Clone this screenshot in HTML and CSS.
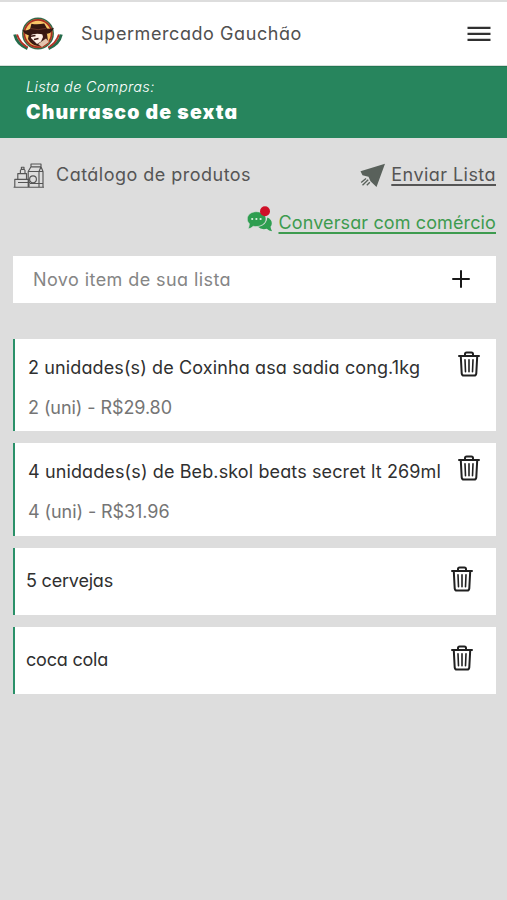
FILE: index.html
```html
<!DOCTYPE html>
<html lang="pt-BR">
<head>
<meta charset="utf-8">
<title>Supermercado Gauchão</title>
<link rel="stylesheet" href="styles.css">
</head>
<body>
<svg class="symbols" aria-hidden="true">
  <symbol id="trash" viewBox="0 0 22 26">
    <g fill="none" stroke="#202020" stroke-linejoin="round" stroke-linecap="round">
      <path stroke-width="2" d="M1 5H21M7 4.5V3Q7 1.5 8.6 1.5H13.4Q15 1.5 15 3V4.5M2.8 5.5L3.7 22.3Q3.9 24.5 5.8 24.5H16.2Q18.1 24.5 18.3 22.3L19.2 5.5"/>
      <path stroke-width="1.6" d="M7 8.7L7.5 20.7M11 8.7V20.7M15 8.7L14.5 20.7"/>
    </g>
  </symbol>
</svg>
<header class="topbar">
  <svg class="logo" viewBox="0 0 50 34">
    <g fill="none" stroke-linecap="butt">
      <path d="M1.7 17.5Q4 27.5 14.5 31.5" stroke="#246b4b" stroke-width="3"/>
      <path d="M4 17.5Q7 26.5 15 30.3" stroke="#b53327" stroke-width="2"/>
      <path d="M48.3 17.5Q46 27.5 35.5 31.5" stroke="#246b4b" stroke-width="3"/>
      <path d="M46 17.5Q43 26.5 35 30.3" stroke="#b53327" stroke-width="2"/>
    </g>
    <circle cx="25" cy="16.5" r="16.6" fill="#fff"/>
    <circle cx="25" cy="16.5" r="15.2" fill="#f2a43a" stroke="#35694b" stroke-width="1.5"/>
    <circle cx="25" cy="16.5" r="13.6" fill="#f8c567" stroke="#a82e22" stroke-width="1.7"/>
    <path d="M16 17H34L35 24Q31 29 25 29Q18 28 15 22Z" fill="#3c1b14"/>
    <path d="M18.3 16.5L29 16L30 20L28 24.5L24 27L20.5 23.5L18 21Z" fill="#fff1e5"/>
    <path d="M18 19.2L22.5 18.5M21 22.5L25.5 21.5" stroke="#3c1b14" stroke-width="1.5"/>
    <path d="M25 27L33 21.5L36 25L29 30Z" fill="#e3c5ad"/>
    <path d="M9.5 13Q14 14.3 17.2 11.7L18.4 6.7Q24 8 31.2 6.5L34 11.5Q38 12 41 10.8Q39 17 30.5 17.5Q22 15.5 16.5 18.5Q11.5 17.5 9.5 13Z" fill="#351710"/>
    <path d="M17.5 11.5Q25 14 33.2 11.3" fill="none" stroke="#74382a" stroke-width=".8"/>
  </svg>
  <h1 class="store">Supermercado Gauchão</h1>
  <svg class="menu" viewBox="0 0 24 16"><path d="M.5 1.8H23.5M.5 7.8H23.5M.5 13.8H23.5" stroke="#303030" stroke-width="2.2"/></svg>
</header>
<section class="banner">
  <p class="banner-label">Lista de Compras:</p>
  <h2 class="banner-title">Churrasco de sexta</h2>
</section>
<main class="content">
  <nav class="actions">
    <a class="catalog">
      <svg class="catalog-icon" viewBox="0 0 32 26"><g fill="none" stroke="#555" stroke-width="1.15" stroke-linejoin="round"><path d="M.6 25.2H31M1.8 25V17.4H16V25M4.8 17V11.6H13.5V17M7.4 11.4V8.5L8.4 7V5.2H11V7L12 8.5V11.4M8 7.4H11.6M5 20.5H17M15.2 25V9.5L18 4.8H28L30 9.5V25M18 4.8V2H28V4.8M15.2 9.5H26V25M26 9.5L28 4.8M26 9.5H30M26 21.5H30M17 21.5H26"/><circle cx="20" cy="17.3" r="3.4"/></g></svg>
      <span class="catalog-label">Catálogo de produtos</span>
    </a>
    <a class="send">
      <svg class="send-icon" viewBox="0 0 26 25"><path d="M25 .8L.5 8.3L2.5 12.3L8.5 13.8L10.5 18.3L16.5 24Z" fill="#59615b"/><path d="M6 15.5L1.2 19.5M8.2 16.7L2.5 22.2M9.8 19.2L6.8 22.2" stroke="#59615b" stroke-width="1.4"/></svg>
      <span class="link">Enviar Lista</span>
    </a>
  </nav>
  <div class="chat">
    <svg class="chat-icon" viewBox="0 0 26 27"><path d="M20.4 11.5Q24.8 13.5 24.8 17.2Q24.8 19.2 23.5 20.8Q23.8 23.3 25.1 25.2Q22 25 19.8 22.8Q14 24 11 20.8Q19.5 19.8 20.4 11.5Z" fill="#2e9e50"/><path d="M9.5 5.7C3.8 5.7.3 8.9.3 13C.3 15 1.2 16.6 2.4 17.8Q2.2 20.8 1 22.8Q4.2 22.5 6.2 20.3C13 21.6 19 18 19 13C19 8.9 15.2 5.7 9.5 5.7Z" fill="#2e9e50" stroke="#ddd" stroke-width=".6"/><g fill="#dff1e2"><circle cx="5.2" cy="13" r="1.1"/><circle cx="9.4" cy="13" r="1.1"/><circle cx="13.6" cy="13" r="1.1"/></g><circle cx="18" cy="5.2" r="5" fill="#cf1028"/></svg>
    <a class="link">Conversar com comércio</a>
  </div>
  <div class="new-item">
    <span class="placeholder">Novo item de sua lista</span>
    <svg class="plus" viewBox="0 0 18 18"><path d="M9 1V17M1 9H17" stroke="#181818" stroke-width="2" stroke-linecap="round"/></svg>
  </div>
  <ul class="items">
    <li class="item detailed">
      <div class="item-text"><p class="name">2 unidades(s) de Coxinha asa sadia cong.1kg</p><p class="price">2 (uni) - R$29.80</p></div>
      <svg class="trash"><use href="#trash"/></svg>
    </li>
    <li class="item detailed">
      <div class="item-text"><p class="name">4 unidades(s) de Beb.skol beats secret lt 269ml</p><p class="price">4 (uni) - R$31.96</p></div>
      <svg class="trash"><use href="#trash"/></svg>
    </li>
    <li class="item simple"><p class="name">5 cervejas</p><svg class="trash"><use href="#trash"/></svg></li>
    <li class="item simple"><p class="name">coca cola</p><svg class="trash"><use href="#trash"/></svg></li>
  </ul>
</main>
</body>
</html>
```
FILE: styles.css
```css
* { box-sizing: border-box; margin: 0; padding: 0; }
body {
  min-height: 900px;
  background: #ddd;
  color: #303030;
  font: 400 18px/24px Inter, "Liberation Sans", sans-serif;
  font-feature-settings: "cv11";
  white-space: nowrap;
}
svg { display: block; flex: none; }
.symbols { position: absolute; width: 0; height: 0; }
.topbar {
  display: flex;
  align-items: center;
  height: 66px;
  padding: 0 16px 0 13px;
  border-top: 2px solid #ddd;
  border-bottom: 1px solid #d5dfda;
  background: #fff;
}
.logo { width: 50px; height: 34px; }
.store { flex: 1; margin-left: 18px; font-size: 18px; font-weight: 400; letter-spacing: .57px; color: #505050; }
.menu { width: 24px; height: 16px; }
.banner { height: 72px; padding: 10px 26px; border-top: 1px solid #217551; background: #27855d; color: #fff; }
.banner-label { font-size: 14.5px; line-height: 20px; font-style: italic; font-weight: 300; letter-spacing: .33px; }
.banner-title { margin-top: 1px; font-size: 19.5px; line-height: 28px; font-weight: 900; letter-spacing: 1.15px; }
.content { padding: 25px 11px 0 13px; }
.actions { display: flex; justify-content: space-between; height: 24px; color: #555; }
.catalog, .send, .chat { display: flex; align-items: center; }
.catalog-icon { width: 32px; height: 26px; margin-right: 11px; }
.catalog-label { letter-spacing: .48px; }
.send-icon { width: 26px; height: 25px; margin-right: 5px; }
.link { text-decoration: underline; text-decoration-thickness: 1.5px; text-underline-offset: 3px; text-decoration-skip-ink: none; }
.send .link { letter-spacing: .45px; }
.chat { justify-content: flex-end; height: 30px; margin-top: 21px; color: #3d9b4f; }
.chat .link { letter-spacing: .12px; }
.chat-icon { width: 26px; height: 27px; margin: -7px 5px 0 0; }
.new-item { display: flex; align-items: center; justify-content: space-between; height: 47px; margin: 18px 0 36px; padding: 0 26px 0 20px; background: #fff; }
.placeholder { letter-spacing: .42px; color: #858585; }
.plus { width: 18px; height: 18px; margin-top: -2px; }
.items { display: grid; gap: 12px; list-style: none; }
.item { display: flex; justify-content: space-between; border-left: 2px solid #2a9169; background: #fff; }
.detailed { height: 92.3px; padding: 17px 16px 0 13px; }
.detailed .name { letter-spacing: .12px; }
.simple { height: 67px; padding: 0 23px 0 11px; align-items: center; }
.simple .name { margin-top: -1px; letter-spacing: -.2px; }
.price { margin-top: 16px; letter-spacing: -.08px; color: #757575; }
.trash { width: 22px; height: 26px; }
.detailed .trash { margin-top: -5px; }
.simple .trash { margin-top: -5px; }
```
